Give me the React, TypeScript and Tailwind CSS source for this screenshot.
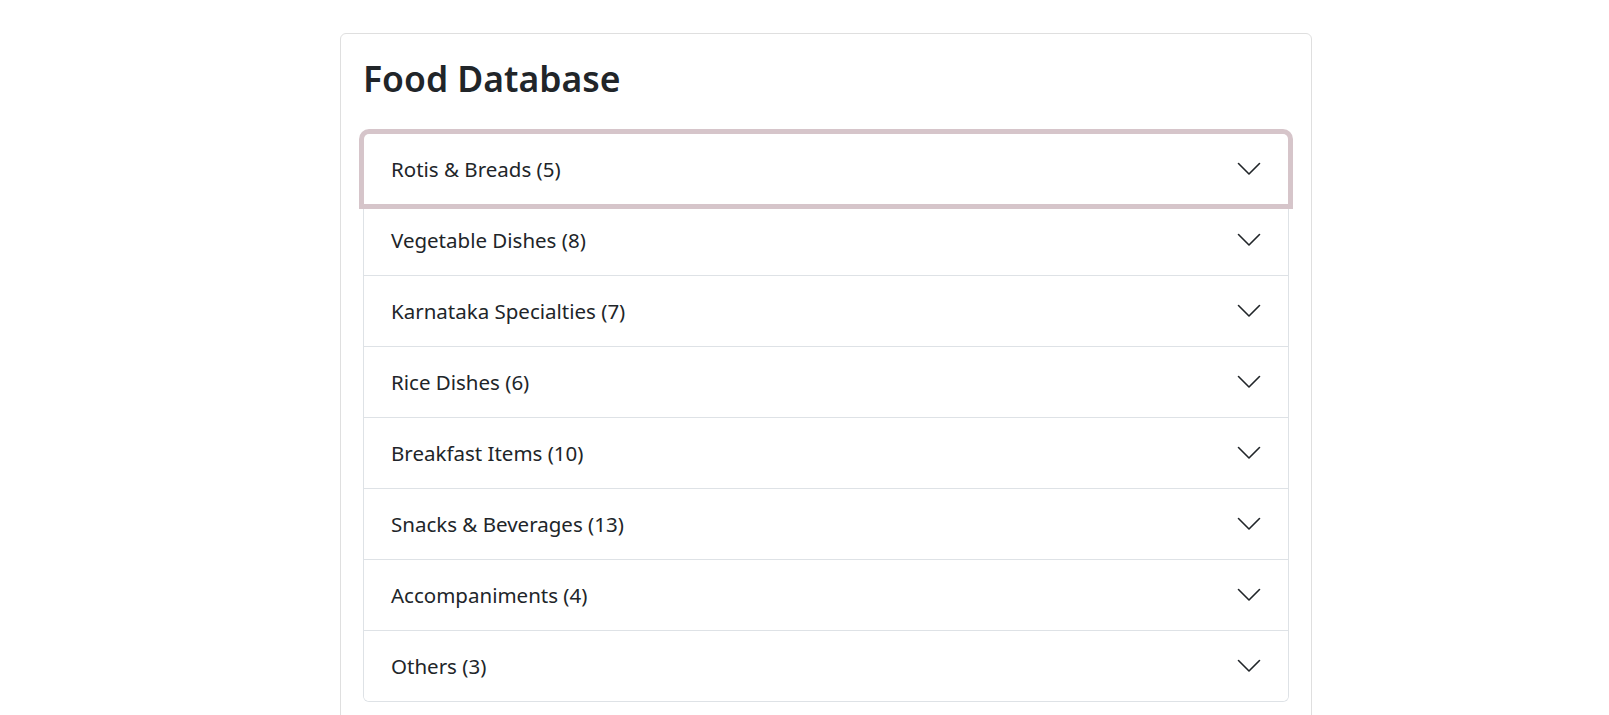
import React from "react";

const items = [
  "Rotis & Breads (5)",
  "Vegetable Dishes (8)",
  "Karnataka Specialties (7)",
  "Rice Dishes (6)",
  "Breakfast Items (10)",
  "Snacks & Beverages (13)",
  "Accompaniments (4)",
  "Others (3)",
];

function Chevron() {
  return (
    <svg width="24" height="14" viewBox="0 0 24 14" fill="none" className="shrink-0">
      <path d="M1.5 1.5 L12 12 L22.5 1.5" stroke="#212529" strokeWidth="1.6" strokeLinecap="round" strokeLinejoin="round" />
    </svg>
  );
}

export default function App() {
  return (
    <div className="min-h-screen bg-white text-[#212529]" style={{ fontFamily: '"Noto Sans", "Open Sans", sans-serif' }}>
      <div className="pt-[33px] pl-[340px]">
        <div className="w-[972px] rounded-[6px] border border-[#dfdfdf] px-[22px] pt-[23px] pb-[21px]">
          <h2 className="text-[35.5px] font-semibold leading-[43px] mb-[33px]">Food Database</h2>
          <div>
            {items.map((label, i) => {
              const first = i === 0;
              const last = i === items.length - 1;
              return (
                <div
                  key={label}
                  className={
                    "border-x border-b border-[#dee2e6] bg-white " +
                    (first ? "border-t rounded-t-[6px] " : "") +
                    (last ? "rounded-b-[6px] " : "")
                  }
                >
                  <button
                    className={
                      "flex h-[70px] w-full items-center justify-between pl-[27px] pr-[27px] text-left text-[20.5px] leading-[1.5] bg-white " +
                      (first ? "relative z-10 rounded-t-[5px] shadow-[0_0_0_5px_#d6c5ca] " : "") +
                      (last ? "rounded-b-[5px] " : "")
                    }
                  >
                    <span>{label}</span>
                    <Chevron />
                  </button>
                </div>
              );
            })}
          </div>
        </div>
      </div>
    </div>
  );
}
